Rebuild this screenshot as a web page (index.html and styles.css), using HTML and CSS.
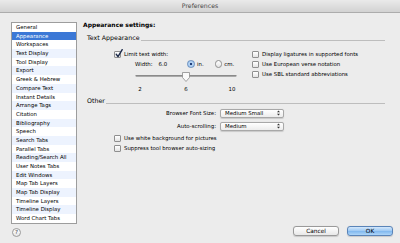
FILE: index.html
```html
<!DOCTYPE html>
<html lang="en">
<head>
  <meta charset="UTF-8">
  <title>Preferences</title>
  <link rel="stylesheet" href="styles.css">
</head>
<body>
  <div class="window">
    <div class="titlebar">Preferences</div>

    <div class="content">
      <div class="sidebar">
        <ul class="pane-list">
          <li>General</li>
          <li class="selected">Appearance</li>
          <li>Workspaces</li>
          <li>Text Display</li>
          <li>Tool Display</li>
          <li>Export</li>
          <li>Greek &amp; Hebrew</li>
          <li>Compare Text</li>
          <li>Instant Details</li>
          <li>Arrange Tags</li>
          <li>Citation</li>
          <li>Bibliography</li>
          <li>Speech</li>
          <li>Search Tabs</li>
          <li>Parallel Tabs</li>
          <li>Reading/Search All</li>
          <li>User Notes Tabs</li>
          <li>Edit Windows</li>
          <li>Map Tab Layers</li>
          <li>Map Tab Display</li>
          <li>Timeline Layers</li>
          <li>Timeline Display</li>
          <li>Word Chart Tabs</li>
        </ul>
        <span class="help">?</span>
      </div>

      <div class="main">
        <h1>Appearance settings:</h1>

        <div class="group-title"><span>Text Appearance</span><i></i></div>
        <div class="text-appearance">
          <div class="col-left">
            <label class="check">
              <span class="box checked">
                <svg width="8" height="9" viewBox="0 0 8 9"><path d="M1.2 5.2 L3 7.6 L7.2 0.6" fill="none" stroke="#1d2b4a" stroke-width="1.4" stroke-linecap="round" stroke-linejoin="round"/></svg>
              </span>
              Limit text width:
            </label>
            <div class="width-row">
              <span class="width-label">Width:</span>
              <span class="width-value">6.0</span>
              <span class="radio on"></span><span class="radio-label">in.</span>
              <span class="radio"></span><span class="radio-label">cm.</span>
            </div>
            <div class="slider">
              <svg width="102" height="14" viewBox="0 0 102 14">
                <rect x="0.5" y="6" width="101" height="2" rx="1" fill="#a9a9a9"/>
                <rect x="0.5" y="6" width="101" height="1" rx="0.5" fill="#8a8a8a"/>
                <path d="M47.5 3.5 h7 v5 l-3.5 4 l-3.5 -4 z" fill="#fafafa" stroke="#8c8c8c" stroke-width="0.8"/>
              </svg>
            </div>
            <div class="ticks"><span>2</span><span>6</span><span>10</span></div>
          </div>
          <div class="col-right">
            <label class="check"><span class="box"></span>Display ligatures in supported fonts</label>
            <label class="check"><span class="box"></span>Use European verse notation</label>
            <label class="check"><span class="box"></span>Use SBL standard abbreviations</label>
          </div>
        </div>

        <div class="group-title other"><span>Other</span><i></i></div>
        <div class="form-row">
          <span class="form-label">Browser Font Size:</span>
          <span class="select">Medium Small
            <svg class="arrows" width="3" height="6" viewBox="0 0 3 6"><path d="M0 2.3 L1.5 0.5 L3 2.3 Z M0 3.7 L1.5 5.5 L3 3.7 Z" fill="#333"/></svg>
          </span>
        </div>
        <div class="form-row">
          <span class="form-label">Auto-scrolling:</span>
          <span class="select">Medium
            <svg class="arrows" width="3" height="6" viewBox="0 0 3 6"><path d="M0 2.3 L1.5 0.5 L3 2.3 Z M0 3.7 L1.5 5.5 L3 3.7 Z" fill="#333"/></svg>
          </span>
        </div>
        <div class="other-checks">
          <label class="check"><span class="box"></span>Use white background for pictures</label>
          <label class="check"><span class="box"></span>Suppress tool browser auto-sizing</label>
        </div>

        <div class="buttons">
          <button class="btn">Cancel</button>
          <button class="btn default">OK</button>
        </div>
      </div>
    </div>
  </div>
</body>
</html>
```

FILE: styles.css
```css
body {
  margin: 0;
  background: #ececec;
  font-family: "DejaVu Sans", "Liberation Sans", sans-serif;
  font-size: 5.4px;
  color: #000;
}

.window {
  width: 400px;
  height: 243px;
  display: flex;
  flex-direction: column;
  overflow: hidden;
}

.titlebar {
  height: 12px;
  line-height: 12px;
  text-align: center;
  font-size: 6.2px;
  color: #4a4a4a;
  background: linear-gradient(#eaeaea, #d2d2d2);
  border-bottom: 1px solid #acacac;
}

.content {
  flex: 1;
  display: flex;
  gap: 6px;
  padding: 8px 7px 0 11px;
}

/* left list */
.sidebar {
  width: 66px;
  display: flex;
  flex-direction: column;
}

.pane-list {
  list-style: none;
  margin: 1px 0 0;
  padding: 0;
  height: 200px;
  border: 1px solid #9d9d9d;
  background: #fff;
}

.pane-list li {
  height: 8.7px;
  line-height: 8.7px;
  padding-left: 4px;
  white-space: nowrap;
}

.pane-list li:nth-child(even) {
  background: #edf3fe;
}

.pane-list li.selected {
  background: #3b78d6;
  color: #fff;
}

.help {
  width: 7px;
  height: 7px;
  margin: 4px 0 0 1px;
  border: 0.8px solid #9a9a9a;
  border-radius: 50%;
  background: linear-gradient(#ffffff, #e6e6e6);
  font-size: 5.6px;
  line-height: 7px;
  text-align: center;
  color: #444;
}

/* right pane */
.main {
  flex: 1;
  display: flex;
  flex-direction: column;
}

h1 {
  margin: 0;
  font-size: 6px;
  line-height: 8px;
  height: 8px;
  font-weight: bold;
}

.group-title {
  display: flex;
  align-items: flex-end;
  height: 8px;
  margin: 5px 8px 0 4px;
  font-size: 6.3px;
  line-height: 8px;
}

.group-title i {
  flex: 1;
  height: 1px;
  margin: 0 0 1px 1px;
  background: #bdbdbd;
}

.group-title.other {
  margin-top: 4px;
}

.text-appearance {
  display: flex;
  margin-top: 7px;
  padding-left: 31px;
}

.col-left {
  width: 138px;
}

.check {
  display: flex;
  align-items: center;
  height: 10px;
  white-space: nowrap;
}

.box {
  position: relative;
  width: 5px;
  height: 5px;
  margin-right: 3px;
  border: 0.8px solid #8f8f8f;
  border-radius: 1px;
  background: linear-gradient(#ffffff, #e4e4e4);
  flex: none;
}

.box svg {
  position: absolute;
  left: 0;
  top: -3px;
}

.width-row {
  display: flex;
  align-items: center;
  height: 10px;
  padding-left: 21px;
}

.width-value {
  margin-left: 6px;
  width: 29px;
}

.radio {
  width: 5.6px;
  height: 5.6px;
  border: 0.8px solid #8f8f8f;
  border-radius: 50%;
  background: linear-gradient(#ffffff, #e4e4e4);
  margin-right: 2px;
}

.radio.on {
  background: radial-gradient(circle, #1f3f7a 0 1.3px, #b9d6f5 1.6px, #8fbdf0 100%);
  border-color: #6b8fbd;
}

.radio-label {
  margin-right: 11px;
}

.slider {
  height: 14px;
  margin-left: 21px;
}

.slider svg {
  display: block;
}

.ticks {
  display: flex;
  justify-content: space-between;
  width: 102px;
  height: 8px;
  line-height: 8px;
  margin: 2px 0 0 21px;
}

.ticks span {
  width: 10px;
  text-align: center;
}

.form-row {
  display: flex;
  align-items: center;
  height: 10px;
  margin-top: 3px;
}

.form-label {
  width: 133px;
  text-align: right;
  margin-right: 4px;
}

.select {
  position: relative;
  width: 58px;
  height: 7px;
  line-height: 7px;
  padding-left: 4px;
  border: 0.8px solid #a8a8a8;
  border-radius: 2px;
  background: linear-gradient(#ffffff, #ececec);
  box-shadow: 0 0.5px 1px rgba(0,0,0,0.15);
}

.select .arrows {
  position: absolute;
  right: 3px;
  top: 0.5px;
}

.other-checks {
  margin-top: 2px;
  padding-left: 31px;
}

.buttons {
  display: flex;
  justify-content: flex-end;
  gap: 8px;
  margin-top: auto;
  margin-bottom: 7px;
}

.btn {
  width: 46px;
  height: 10px;
  padding: 0;
  font-family: inherit;
  font-size: 5.8px;
  color: #000;
  border: 0.8px solid #9a9a9a;
  border-radius: 3px;
  background: linear-gradient(#ffffff, #e8e8e8);
  box-shadow: 0 0.5px 1px rgba(0,0,0,0.15);
}

.btn.default {
  border-color: #5a84b8;
  background: linear-gradient(#d4e8fc, #9cc8f3 50%, #7fb7ee 51%, #aed5f8);
}
```
